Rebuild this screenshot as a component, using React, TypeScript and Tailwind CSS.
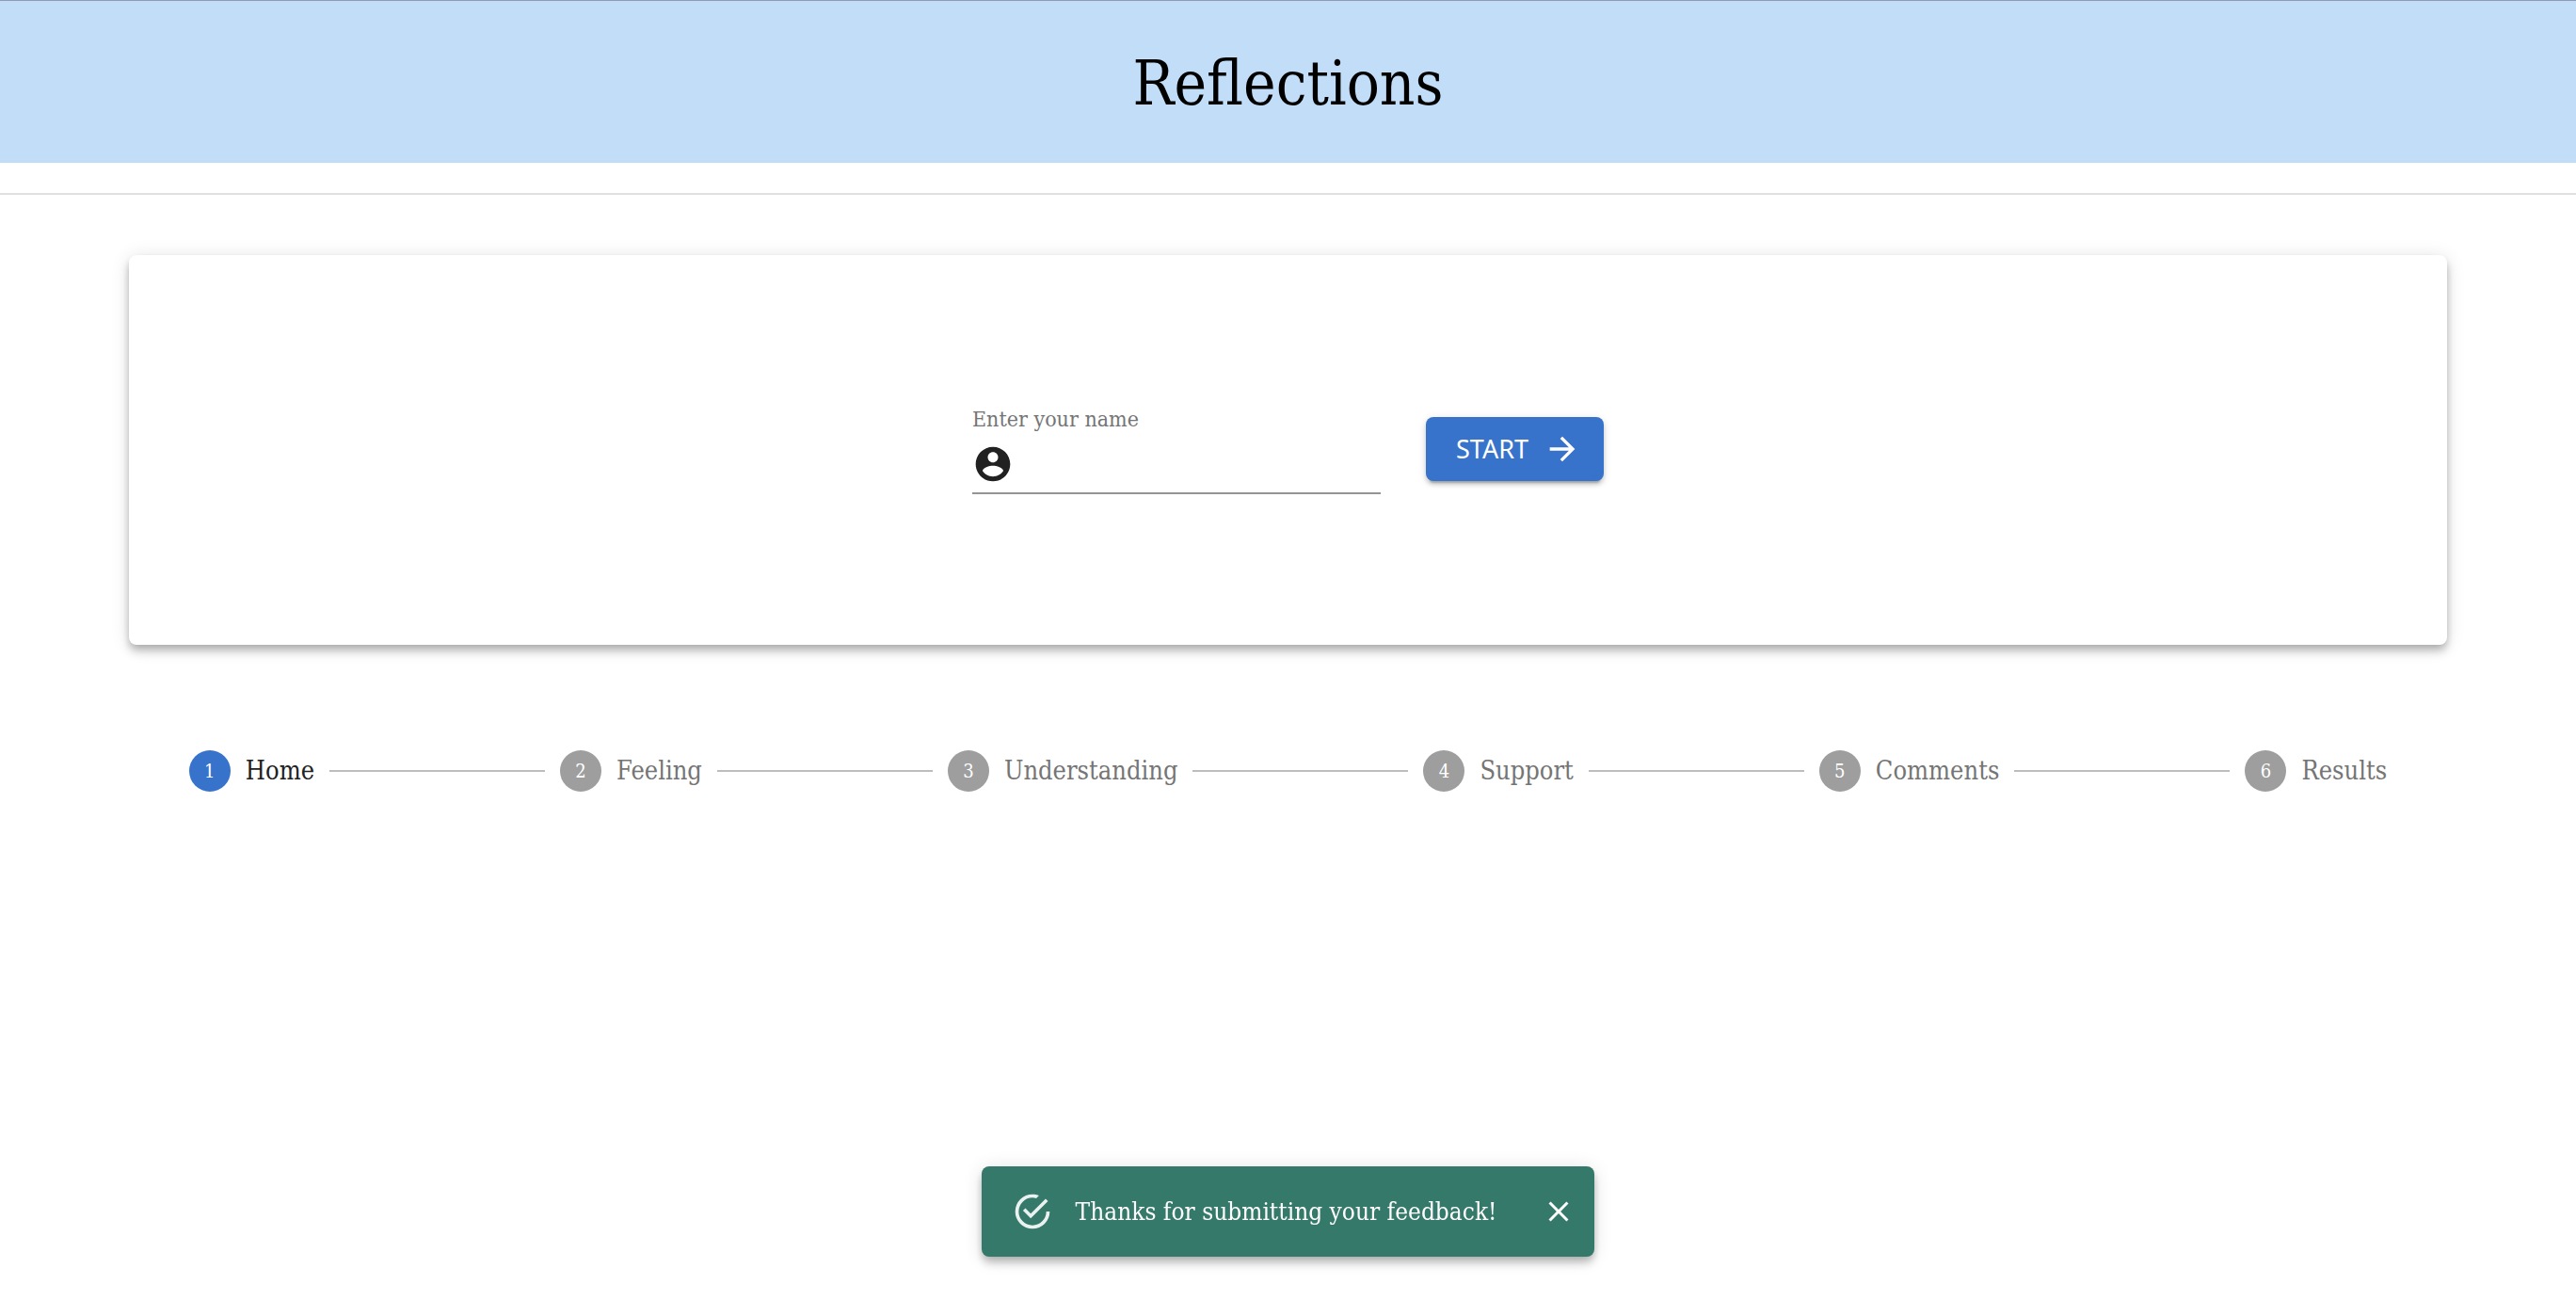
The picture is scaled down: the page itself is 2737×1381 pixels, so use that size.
import { Fragment, useState } from "react";

const steps = ["Home", "Feeling", "Understanding", "Support", "Comments", "Results"];

const icons = {
  account:
    "M12 2C6.48 2 2 6.48 2 12s4.48 10 10 10 10-4.48 10-10S17.52 2 12 2zm0 3c1.66 0 3 1.34 3 3s-1.34 3-3 3-3-1.34-3-3 1.34-3 3-3zm0 14.2c-2.5 0-4.71-1.28-6-3.22.03-1.99 4-3.08 6-3.08 1.99 0 5.97 1.09 6 3.08-1.29 1.94-3.5 3.22-6 3.22z",
  arrow: "M12 4l-1.41 1.41L16.17 11H4v2h12.17l-5.58 5.59L12 20l8-8z",
  success:
    "M20,12A8,8 0 0,1 12,20A8,8 0 0,1 4,12A8,8 0 0,1 12,4C12.76,4 13.5,4.11 14.2,4.31L15.77,2.74C14.61,2.26 13.34,2 12,2A10,10 0 0,0 2,12A10,10 0 0,0 12,22A10,10 0 0,0 22,12M7.91,10.08L6.5,11.5L11,16L21,6L19.59,4.58L11,13.17L7.91,10.08Z",
  close:
    "M19 6.41L17.59 5 12 10.59 6.41 5 5 6.41 10.59 12 5 17.59 6.41 19 12 13.41 17.59 19 19 17.59 13.41 12z",
};

function Icon({ name, className }: { name: keyof typeof icons; className: string }) {
  return (
    <svg viewBox="0 0 24 24" fill="currentColor" aria-hidden="true" className={`shrink-0 ${className}`}>
      <path d={icons[name]} />
    </svg>
  );
}

function NameForm() {
  const [name, setName] = useState("");
  return (
    <section className="flex min-h-[414px] items-center justify-center rounded-lg bg-white pb-0.5 shadow-[0_4px_8px_-2px_rgba(0,0,0,0.2),0_8px_10px_0_rgba(0,0,0,0.14),0_2px_20px_0_rgba(0,0,0,0.12)]">
      <form className="flex items-center gap-12" onSubmit={(e) => e.preventDefault()}>
        <div className="w-[434px]">
          <label htmlFor="name" className="block text-[23px] leading-8 text-[#757575]">
            Enter your name
          </label>
          <div className="mt-2.5 flex items-center gap-4 border-b-2 border-[#949494] pb-2">
            <Icon name="account" className="size-11 text-[#212121]" />
            <input
              id="name"
              type="text"
              value={name}
              onChange={(e) => setName(e.target.value)}
              className="h-11 min-w-0 flex-1 bg-transparent text-[27px] outline-none"
            />
          </div>
        </div>
        <button
          type="submit"
          className="flex h-[68px] items-center gap-4 rounded-lg bg-[#3873cb] pr-6 pl-8 font-['Noto_Sans',sans-serif] text-[27px] text-white shadow-[0_6px_2px_-4px_rgba(0,0,0,0.2),0_4px_4px_0_rgba(0,0,0,0.14),0_2px_10px_0_rgba(0,0,0,0.12)]"
        >
          START
          <Icon name="arrow" className="size-10" />
        </button>
      </form>
    </section>
  );
}

function Stepper({ active }: { active: number }) {
  return (
    <ol className="mt-12 flex items-center gap-4 p-16 text-[27px] leading-11">
      {steps.map((step, i) => (
        <Fragment key={step}>
          {i > 0 && <li aria-hidden="true" className="h-0.5 flex-1 bg-[#bdbdbd]" />}
          <li
            aria-current={i === active ? "step" : undefined}
            className={`flex items-center gap-4 ${i === active ? "text-[#212121]" : "text-[#757575]"}`}
          >
            <span
              className={`flex size-11 items-center justify-center rounded-full text-xl text-white ${
                i === active ? "bg-[#3873cb]" : "bg-[#9e9e9e]"
              }`}
            >
              {i + 1}
            </span>
            {step}
          </li>
        </Fragment>
      ))}
    </ol>
  );
}

function Toast({ onClose }: { onClose: () => void }) {
  return (
    <div className="fixed inset-x-0 bottom-[46px] flex justify-center">
      <div
        role="status"
        className="flex h-24 items-center rounded-lg bg-[#35796b] pr-3 pl-8 text-[26px] text-white shadow-[0_4px_8px_-2px_rgba(0,0,0,0.2),0_8px_10px_0_rgba(0,0,0,0.14),0_2px_20px_0_rgba(0,0,0,0.12)]"
      >
        <Icon name="success" className="mr-6 size-11 opacity-90" />
        <span>Thanks for submitting your feedback!</span>
        <button type="button" aria-label="Close" onClick={onClose} className="ml-10 p-2">
          <Icon name="close" className="size-9" />
        </button>
      </div>
    </div>
  );
}

export default function App() {
  const [toastOpen, setToastOpen] = useState(true);
  return (
    <div className="min-h-screen bg-white font-['DejaVu_Serif_Condensed','DejaVu_Serif',serif] text-black">
      <header className="border-t border-[#8f9bb3] bg-[#c2ddf8] pt-[46px] pb-[42px]">
        <h1 className="text-center text-[65px] leading-[84px]">Reflections</h1>
      </header>
      <hr className="mt-8 border-t-2 border-[#e0e0e0]" />
      <main className="mx-auto mt-16 w-[90%]">
        <NameForm />
        <Stepper active={0} />
      </main>
      {toastOpen && <Toast onClose={() => setToastOpen(false)} />}
    </div>
  );
}
